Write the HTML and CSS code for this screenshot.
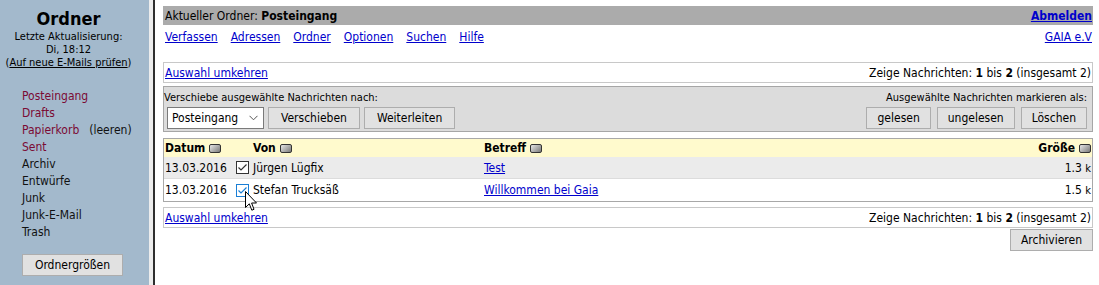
FILE: index.html
```html
<!DOCTYPE html>
<html lang="de">
<head>
<meta charset="utf-8">
<title>Posteingang</title>
<link rel="stylesheet" href="styles.css">
</head>
<body>
<div class="page">
  <aside class="sidebar">
    <div class="sb-head">
      <div class="title">Ordner</div>
      <div class="small">Letzte Aktualisierung:</div>
      <div class="small">Di, 18:12</div>
      <div class="small">(<a class="refresh" href="#">Auf neue E-Mails prüfen</a>)</div>
    </div>
    <ul class="folders">
      <li class="special">Posteingang</li>
      <li class="special">Drafts</li>
      <li><span class="special">Papierkorb</span><span class="purge">(leeren)</span></li>
      <li class="special">Sent</li>
      <li>Archiv</li>
      <li>Entwürfe</li>
      <li>Junk</li>
      <li>Junk-E-Mail</li>
      <li>Trash</li>
    </ul>
    <button class="btn sizes">Ordnergrößen</button>
  </aside>

  <main class="main">
    <div class="topbar">
      <span>Aktueller Ordner: <b>Posteingang</b></span>
      <a class="logout" href="#">Abmelden</a>
    </div>
    <nav class="nav">
      <div class="links">
        <a href="#">Verfassen</a>
        <a href="#">Adressen</a>
        <a href="#">Ordner</a>
        <a href="#">Optionen</a>
        <a href="#">Suchen</a>
        <a href="#">Hilfe</a>
      </div>
      <a href="#">GAIA e.V</a>
    </nav>

    <div class="pager">
      <a href="#">Auswahl umkehren</a>
      <span>Zeige Nachrichten: <b>1</b> bis <b>2</b> (insgesamt 2)</span>
    </div>

    <div class="actions">
      <div class="act-row1">
        <span>Verschiebe ausgewählte Nachrichten nach:</span>
        <span>Ausgewählte Nachrichten markieren als:</span>
      </div>
      <div class="act-row2">
        <div class="left-ctrls">
          <div class="select">
            <span>Posteingang</span>
            <svg class="chev" width="9" height="6" viewBox="0 0 9 6"><path d="M0.5 0.8 L4.5 4.8 L8.5 0.8" fill="none" stroke="#555" stroke-width="1"/></svg>
          </div>
          <button class="btn wide">Verschieben</button>
          <button class="btn wide">Weiterleiten</button>
        </div>
        <div class="right-ctrls">
          <button class="btn">gelesen</button>
          <button class="btn">ungelesen</button>
          <button class="btn">Löschen</button>
        </div>
      </div>
    </div>

    <table class="list">
      <colgroup>
        <col class="c-date"><col class="c-chk"><col class="c-from"><col class="c-subj"><col class="c-size">
      </colgroup>
      <thead>
        <tr>
          <th class="date">Datum<span class="sort"></span></th>
          <th></th>
          <th class="from">Von<span class="sort"></span></th>
          <th class="subj">Betreff<span class="sort"></span></th>
          <th class="size">Größe<span class="sort"></span></th>
        </tr>
      </thead>
      <tbody>
        <tr class="r1">
          <td class="date">13.03.2016</td>
          <td class="chk">
            <svg width="13" height="13" viewBox="0 0 13 13"><rect x="0.5" y="0.5" width="12" height="12" fill="#fff" stroke="#333"/><path d="M2.5 6.5 L5 9 L10.5 3.5" fill="none" stroke="#333" stroke-width="1.2"/></svg>
          </td>
          <td class="from">Jürgen Lügfix</td>
          <td class="subj"><a href="#">Test</a></td>
          <td class="size">1.3 <span class="k">k</span></td>
        </tr>
        <tr class="r2">
          <td class="date">13.03.2016</td>
          <td class="chk">
            <svg width="13" height="13" viewBox="0 0 13 13"><rect x="0.5" y="0.5" width="12" height="12" fill="#fff" stroke="#1a7fd6"/><path d="M2.5 6.5 L5 9 L10.5 3.5" fill="none" stroke="#1a7fd6" stroke-width="1.2"/></svg>
            <svg class="cursor" width="13" height="21" viewBox="0 0 13 21"><path d="M0.5 0.5 L0.5 16.5 L4.3 12.8 L6.8 19.2 L9 18.3 L6.6 12 L11.5 12 Z" fill="#fff" stroke="#000" stroke-width="1" stroke-linejoin="round"/></svg>
          </td>
          <td class="from">Stefan Trucksäß</td>
          <td class="subj"><a href="#">Willkommen bei Gaia</a></td>
          <td class="size">1.5 <span class="k">k</span></td>
        </tr>
      </tbody>
    </table>

    <div class="pager bottom">
      <a href="#">Auswahl umkehren</a>
      <span>Zeige Nachrichten: <b>1</b> bis <b>2</b> (insgesamt 2)</span>
    </div>

    <div class="archive-row">
      <button class="btn">Archivieren</button>
    </div>
  </main>
</div>
</body>
</html>
```

FILE: styles.css
```css
* { box-sizing: border-box; }

body {
  margin: 0;
  font-family: "DejaVu Sans Condensed", "DejaVu Sans", sans-serif;
  font-size: 12px;
  color: #000;
  background: #fff;
}

a { color: #0000cc; text-decoration: underline; }

.page {
  display: flex;
  height: 285px;
  overflow: hidden;
}

/* ---------- sidebar ---------- */
.sidebar {
  width: 153px;
  flex: none;
  background: #a3b9cc;
  border-right: 4px solid #ececec;
  padding-top: 8px;
}

.sb-head {
  width: 137px;
  text-align: center;
}

.title {
  font-size: 18px;
  font-weight: bold;
  line-height: 22px;
}

.small {
  font-size: 11px;
  line-height: 13px;
}

.refresh { color: #000; }

.folders {
  list-style: none;
  margin: 19px 0 0;
  padding: 0 0 0 22px;
  font-size: 12px;
  line-height: 17px;
  color: #111;
}

.special { color: #7b0a34; }

.purge {
  margin-left: 10px;
  color: #111;
}

.btn {
  font-family: inherit;
  font-size: 12px;
  height: 22px;
  background: #e1e1e1;
  border: 1px solid #adadad;
  border-radius: 0;
  padding: 0 10px;
  color: #000;
  line-height: 20px;
}

.btn.wide { padding: 0 12px; }

.sizes {
  margin: 13px 0 0 22px;
  width: 101px;
  padding: 0;
}

/* ---------- main ---------- */
.main {
  flex: 1;
  min-width: 0;
  border-left: 2px solid #2e2e2e;
  padding: 6px 6px 0 8px;
}

.topbar {
  display: flex;
  justify-content: space-between;
  align-items: center;
  height: 19px;
  background: #ababab;
  padding: 0 1px 0 2px;
}

.logout { font-weight: bold; }

.nav {
  display: flex;
  justify-content: space-between;
  align-items: center;
  height: 24px;
  padding: 0 1px 0 2px;
}

.nav .links {
  display: flex;
  gap: 13px;
}

.pager {
  margin-top: 13px;
  height: 21px;
  border: 1px solid #c8c8c8;
  display: flex;
  justify-content: space-between;
  align-items: center;
  padding: 0 1px 0 1px;
}

.pager.bottom { margin-top: 5px; }

.actions {
  margin-top: 3px;
  height: 46px;
  border: 1px solid #a6a6a6;
  background: #dcdcdc;
  padding: 0 5px 0 0;
}

.act-row1 {
  display: flex;
  justify-content: space-between;
  align-items: center;
  height: 20px;
  font-size: 11px;
}

.act-row2 {
  display: flex;
  justify-content: space-between;
  align-items: center;
  height: 22px;
}

.left-ctrls {
  display: flex;
  gap: 4px;
  padding-left: 3px;
}

.right-ctrls {
  display: flex;
  gap: 6px;
}

.select {
  width: 97px;
  height: 22px;
  background: #fff;
  border: 1px solid #7a7a7a;
  display: flex;
  align-items: center;
  justify-content: space-between;
  padding: 0 5px 0 4px;
}

.chev { display: block; }

/* ---------- message list ---------- */
.list {
  margin-top: 6px;
  width: 100%;
  border: 1px solid #a8a8a8;
  border-collapse: separate;
  border-spacing: 0;
  table-layout: fixed;
}

.c-date { width: 68px; }
.c-chk { width: 19px; }
.c-from { width: 231px; }
.c-subj { width: 420px; }

.list th, .list td {
  padding: 0;
  text-align: left;
  white-space: nowrap;
}

.list thead tr { background: #fffacd; height: 18px; }
.list th { font-weight: bold; }

.list .date { padding-left: 1px; }
.list .chk { padding-left: 4px; position: relative; }
.list .chk svg { display: block; }
.list .from { padding-left: 2px; }
.list .subj { padding-left: 2px; }
.list .size { text-align: right; padding-right: 1px; }

.sort {
  display: inline-block;
  width: 12px;
  height: 9px;
  border: 1px solid #333;
  border-radius: 2px;
  background: linear-gradient(135deg, #e6e6e6, #7a7a7a);
  margin-left: 4px;
  vertical-align: -1px;
}

.r1 { background: #ebebeb; height: 21px; }
.r2 { height: 23px; }
.r2 td { border-top: 1px solid #dcdcdc; }

.k { font-size: 11px; }

.list .chk .cursor {
  position: absolute;
  left: 13px;
  top: 12px;
}

.archive-row {
  display: flex;
  justify-content: flex-end;
  margin-top: 1px;
}
```
